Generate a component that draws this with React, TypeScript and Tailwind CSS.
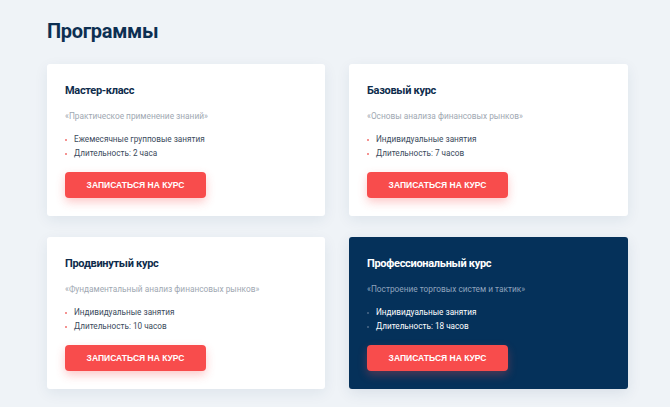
const courses = [
  {
    title: "Мастер-класс",
    subtitle: "«Практическое применение знаний»",
    items: ["Ежемесячные групповые занятия", "Длительность: 2 часа"],
    dark: false,
  },
  {
    title: "Базовый курс",
    subtitle: "«Основы анализа финансовых рынков»",
    items: ["Индивидуальные занятия", "Длительность: 7 часов"],
    dark: false,
  },
  {
    title: "Продвинутый курс",
    subtitle: "«Фундаментальный анализ финансовых рынков»",
    items: ["Индивидуальные занятия", "Длительность: 10 часов"],
    dark: false,
  },
  {
    title: "Профессиональный курс",
    subtitle: "«Построение торговых систем и тактик»",
    items: ["Индивидуальные занятия", "Длительность: 18 часов"],
    dark: true,
  },
];

function CourseCard({ title, subtitle, items, dark }: (typeof courses)[number]) {
  return (
    <div
      className={
        dark
          ? "rounded-[3px] bg-[#05315a] px-[18px] pt-[20px] pb-[18px] shadow-[0_4px_14px_rgba(30,60,100,0.10)]"
          : "rounded-[3px] bg-white px-[18px] pt-[20px] pb-[18px] shadow-[0_4px_14px_rgba(30,60,100,0.08)]"
      }
    >
      <h3
        className={
          dark
            ? "text-[11px] font-bold leading-[14px] tracking-[-0.3px] text-white"
            : "text-[11px] font-bold leading-[14px] tracking-[-0.3px] text-[#0e2c4c]"
        }
      >
        {title}
      </h3>
      <p
        className={
          dark
            ? "mt-[13px] text-[8.3px] leading-[11px] text-[#8fa4bd]"
            : "mt-[13px] text-[8.3px] leading-[11px] text-[#a0a8b2]"
        }
      >
        {subtitle}
      </p>
      <ul className="mt-[12px] flex flex-col gap-[3px]">
        {items.map((item) => (
          <li
            key={item}
            className={
              dark
                ? "flex items-center text-[8.2px] leading-[11px] text-white"
                : "flex items-center text-[8.2px] leading-[11px] text-[#3b4a5c]"
            }
          >
            <span
              className={
                dark
                  ? "mr-[7px] h-[2px] w-[2px] rounded-full bg-[#4d6a8a]"
                  : "mr-[7px] h-[2px] w-[2px] rounded-full bg-[#f2706e]"
              }
            />
            {item}
          </li>
        ))}
      </ul>
      <button className="mt-[13px] flex h-[26px] w-[141px] items-center justify-center rounded-[4px] bg-[#f84c4c] font-['Liberation_Sans',Arial,sans-serif] text-[8.5px] font-bold text-white shadow-[0_4px_10px_rgba(248,76,76,0.30)]">
        ЗАПИСАТЬСЯ НА КУРС
      </button>
    </div>
  );
}

export default function App() {
  return (
    <div className="min-h-[407px] w-full bg-[#eff3f7] font-['Roboto',sans-serif] pt-[18px] pl-[47px] pr-[42px] pb-[19px]">
      <h2 className="text-[20px] font-bold leading-[26px] tracking-[-0.3px] text-[#0d2f52]">
        Программы
      </h2>
      <div className="mt-[20px] grid grid-cols-[278px_279px] gap-x-[24px] gap-y-[21px]">
        {courses.map((c) => (
          <CourseCard key={c.title} {...c} />
        ))}
      </div>
    </div>
  );
}
